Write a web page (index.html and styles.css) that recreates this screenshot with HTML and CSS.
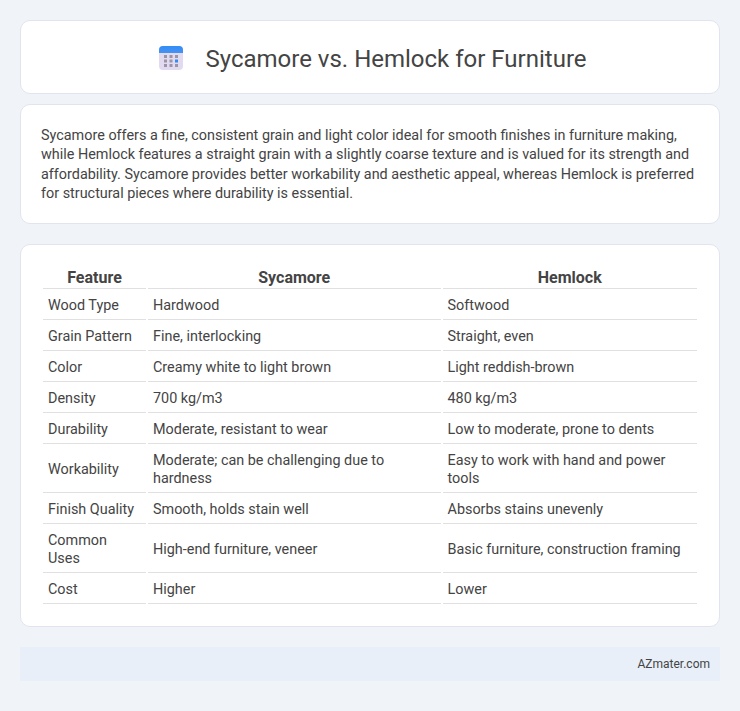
FILE: index.html
```html
<!DOCTYPE html>
<html lang="en">
<head>
<meta charset="utf-8">
<title>Sycamore vs. Hemlock for Furniture</title>
<link rel="stylesheet" href="styles.css">
</head>
<body>
<div class="page">
  <header class="card title-card">
    <svg class="logo" viewBox="0 0 24 24" width="24" height="24" aria-hidden="true">
      <defs>
        <linearGradient id="cal-top" x1="0" y1="0" x2="0" y2="1">
          <stop offset="0" stop-color="#2f8ef8"/>
          <stop offset="1" stop-color="#4a90f0"/>
        </linearGradient>
      </defs>
      <rect x="0" y="0" width="24" height="24" rx="4" fill="#e2dbf0"/>
      <path d="M0 7V4a4 4 0 0 1 4-4h16a4 4 0 0 1 4 4v3z" fill="url(#cal-top)"/>
      <g fill="#9a96a8">
        <rect x="5" y="9" width="3" height="3"/><rect x="10.500" y="9" width="3" height="3"/><rect x="16" y="9" width="3" height="3"/>
        <rect x="5" y="13.500" width="3" height="3"/><rect x="10.500" y="13.500" width="3" height="3"/>
        <rect x="5" y="18" width="3" height="3"/><rect x="10.500" y="18" width="3" height="3"/><rect x="16" y="18" width="3" height="3"/>
      </g>
      <rect x="16" y="13.500" width="3" height="3" fill="#2f8cf0"/>
    </svg>
    <h1>Sycamore vs. Hemlock for Furniture</h1>
  </header>
  <section class="card intro">
    <p>Sycamore offers a fine, consistent grain and light color ideal for smooth finishes in furniture making, while Hemlock features a straight grain with a slightly coarse texture and is valued for its strength and affordability. Sycamore provides better workability and aesthetic appeal, whereas Hemlock is preferred for structural pieces where durability is essential.</p>
  </section>
  <section class="card table-card">
    <table>
      <thead>
        <tr><th class="c1">Feature</th><th class="c2">Sycamore</th><th class="c3">Hemlock</th></tr>
      </thead>
      <tbody>
        <tr><td>Wood Type</td><td>Hardwood</td><td>Softwood</td></tr>
        <tr><td>Grain Pattern</td><td>Fine, interlocking</td><td>Straight, even</td></tr>
        <tr><td>Color</td><td>Creamy white to light brown</td><td>Light reddish-brown</td></tr>
        <tr><td>Density</td><td>700 kg/m3</td><td>480 kg/m3</td></tr>
        <tr><td>Durability</td><td>Moderate, resistant to wear</td><td>Low to moderate, prone to dents</td></tr>
        <tr><td>Workability</td><td>Moderate; can be challenging due to hardness</td><td>Easy to work with hand and power tools</td></tr>
        <tr><td>Finish Quality</td><td>Smooth, holds stain well</td><td>Absorbs stains unevenly</td></tr>
        <tr><td>Common Uses</td><td>High-end furniture, veneer</td><td>Basic furniture, construction framing</td></tr>
        <tr><td>Cost</td><td>Higher</td><td>Lower</td></tr>
      </tbody>
    </table>
  </section>
  <footer class="footer">AZmater.com</footer>
</div>
</body>
</html>
```
FILE: styles.css
```css
* { box-sizing: border-box; }
html, body { margin: 0; padding: 0; }
body {
  background: #f0f4f9;
  color: #444;
  font-family: Roboto, "Liberation Sans", sans-serif;
}
.page {
  display: flex;
  flex-direction: column;
  padding: 20px;
  height: 711px;
}
.card {
  background: #fff;
  border: 1px solid #e1e4f0;
  border-radius: 10px;
}
.title-card {
  height: 74px;
  display: flex;
  align-items: center;
  justify-content: center;
  gap: 22px;
  padding: 2px 0 0 6px;
}
.logo { flex: none; }
h1 {
  margin: 0;
  padding-top: 2px;
  font-size: 24px;
  font-weight: 400;
  line-height: 30px;
  color: #444;
}
.intro {
  margin-top: 10px;
  padding: 21px 20px 20px;
  height: 120px;
}
.intro p {
  margin: 0;
  font-size: 14.4px;
  line-height: 19.44px;
}
.table-card {
  margin-top: 20px;
  padding: 21px 20px 20px;
  height: 383px;
}
table {
  width: 100%;
  table-layout: fixed;
  border-collapse: separate;
  border-spacing: 2px;
  font-size: 14.4px;
  line-height: 18px;
}
.c1 { width: 103px; }
.c2 { width: 292.500px; }
th {
  font-size: 16px;
  font-weight: 700;
  line-height: 20px;
  padding: 0 5px;
  text-align: center;
  border-bottom: 1px solid #e0e0e0;
}
td {
  padding: 6px 5px 4px;
  border-bottom: 1px solid #e0e0e0;
  vertical-align: middle;
}
.footer {
  margin-top: 20px;
  height: 34px;
  background: #e8eff8;
  display: flex;
  align-items: center;
  justify-content: flex-end;
  padding: 0 10px;
  font-size: 12px;
  color: #444;
}
```
